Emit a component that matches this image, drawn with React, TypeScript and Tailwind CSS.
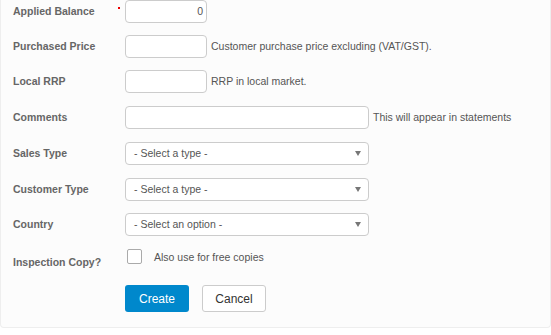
import React from "react";

const label = "w-[112px] shrink-0 text-[10.5px] font-bold text-[#666] leading-none";
const input = "h-[23px] border border-[#ccc] rounded-[4px] bg-white box-border";
const hint = "text-[10.5px] text-[#555] ml-[4px] leading-none";

function Select({ text }: { text: string }) {
  return (
    <div className={`${input} w-[244px] flex items-center justify-between pl-[8px] pr-[7px]`}>
      <span className="text-[10.5px] text-[#555] leading-none">{text}</span>
      <svg width="6" height="5" viewBox="0 0 6 5">
        <polygon points="0,0 6,0 3,5" fill="#777" />
      </svg>
    </div>
  );
}

export default function App() {
  return (
    <div
      className="w-[551px] h-[335px] bg-white"
      style={{ fontFamily: '"Liberation Sans", Arial, sans-serif' }}
    >
      <div className="h-[328px] bg-[#fcfcfc] border-b border-x border-[#eee] rounded-b-[4px] pl-[12px]">
        <div className="flex items-center h-[23px]">
          <div className={`${label} relative`}>
            Applied Balance
            <span className="absolute left-[105px] top-[1px] w-[2px] h-[2px] bg-[#e00]" />
          </div>
          <div className={`${input} w-[82px] flex items-center justify-end pr-[3px] text-[10.5px] text-[#555]`}>0</div>
        </div>
        <div className="flex items-center h-[23px] mt-[12px]">
          <div className={label}>Purchased Price</div>
          <div className={`${input} w-[82px]`} />
          <span className={hint}>Customer purchase price excluding (VAT/GST).</span>
        </div>
        <div className="flex items-center h-[23px] mt-[12px]">
          <div className={label}>Local RRP</div>
          <div className={`${input} w-[82px]`} />
          <span className={hint}>RRP in local market.</span>
        </div>
        <div className="flex items-center h-[23px] mt-[13px]">
          <div className={label}>Comments</div>
          <div className={`${input} w-[244px]`} />
          <span className="text-[10.5px] text-[#555] ml-[4px] leading-none">This will appear in statements</span>
        </div>
        <div className="flex items-center h-[23px] mt-[13px]">
          <div className={label}>Sales Type</div>
          <Select text="- Select a type -" />
        </div>
        <div className="flex items-center h-[23px] mt-[13px]">
          <div className={label}>Customer Type</div>
          <Select text="- Select a type -" />
        </div>
        <div className="flex items-center h-[23px] mt-[12px]">
          <div className={label}>Country</div>
          <Select text="- Select an option -" />
        </div>
        <div className="flex items-start h-[20px] mt-[13px]">
          <div className={`${label} mt-[8px]`}>Inspection Copy?</div>
          <div className="ml-[2px] w-[15px] h-[15px] border border-[#aaa] rounded-[2px] bg-white" />
          <span className="text-[10.5px] text-[#555] ml-[12px] mt-[3px] leading-none">Also use for free copies</span>
        </div>
        <div className="flex items-center ml-[112px] mt-[16px]">
          <button className="w-[64px] h-[27px] bg-[#0088cc] text-white text-[12px] rounded-[3px]">Create</button>
          <button className="w-[64px] h-[27px] ml-[13px] bg-white border border-[#ccc] text-[#333] text-[12px] rounded-[3px]">Cancel</button>
        </div>
      </div>
    </div>
  );
}
